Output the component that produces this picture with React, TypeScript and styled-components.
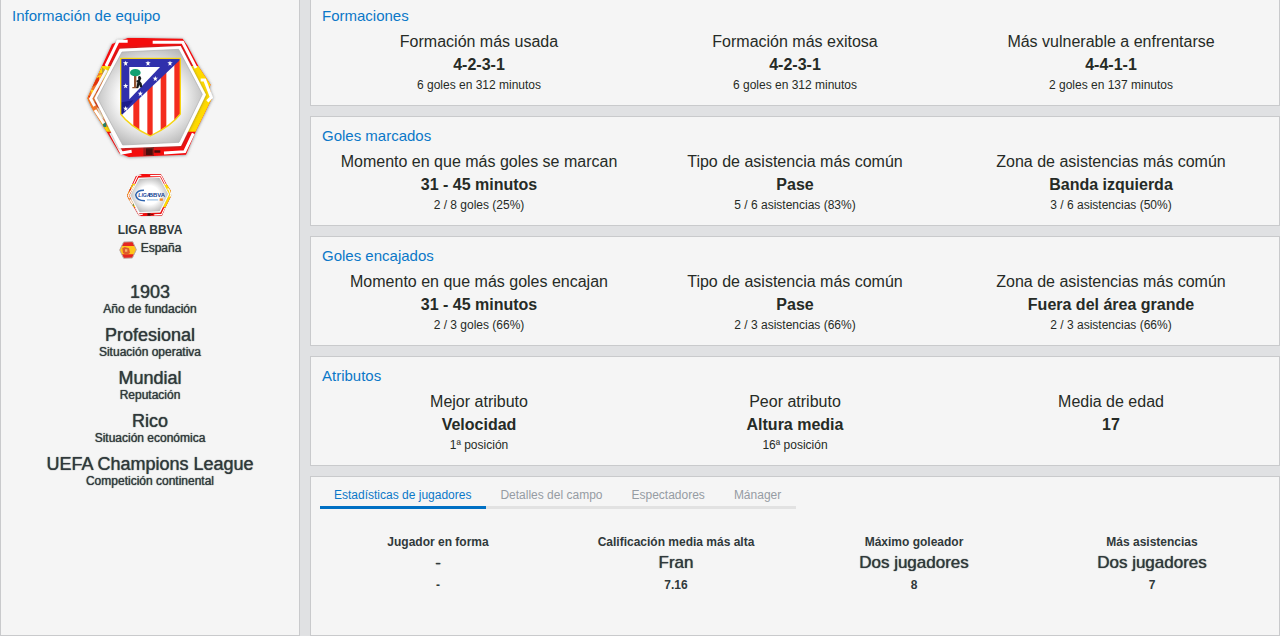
import React, { useState } from "react";
import styled, { createGlobalStyle, css } from "styled-components";

const color = {
  page: "#e0e1e3",
  panel: "#f5f5f5",
  border: "#c9cacc",
  link: "#0b78c8",
  accent: "#0070c4",
  text: "#262b26",
  muted: "#30393b",
  tab: "#969ca3",
};

const GlobalStyle = createGlobalStyle`
  * { box-sizing: border-box; }
  body {
    margin: 0;
    background: ${color.page};
    color: ${color.text};
    font-family: "Liberation Sans", Arial, sans-serif;
  }
`;

/* A medium weight, between the regular and bold faces of the font. */
const medium = css`
  text-shadow: 0 0 1px currentColor;
`;

const Page = styled.main`
  display: grid;
  grid-template-columns: 300px minmax(0, 1fr);
  gap: 10px;
  min-height: 100vh;
`;

const Sidebar = styled.aside`
  display: flex;
  flex-direction: column;
  align-items: center;
  padding: 6px 11px;
  background: ${color.panel};
  border: 1px solid ${color.border};
  border-top: 0;
`;

const Content = styled.div`
  display: flex;
  flex-direction: column;
  gap: 10px;
`;

const Title = styled.h2`
  align-self: stretch;
  margin: 0;
  color: ${color.link};
  font-size: 15px;
  font-weight: 400;
  line-height: 20px;
`;

const Card = styled.section<{ $first?: boolean; $grow?: boolean }>`
  padding: ${(p) => (p.$first ? 6 : 9)}px 10px 11px;
  background: ${color.panel};
  border: 1px solid ${color.border};
  flex-grow: ${(p) => (p.$grow ? 1 : 0)};
  ${(p) => p.$first && "border-top: 0;"}

  ${Title} {
    padding-left: 1px;
  }
`;

const Columns = styled.div`
  display: grid;
  grid-template-columns: repeat(3, minmax(0, 1fr));
  margin-top: 4px;
  text-align: center;
`;

const Label = styled.div`
  font-size: 16px;
  line-height: 24px;
`;

const Value = styled.div`
  font-size: 16px;
  font-weight: 700;
  line-height: 22px;
`;

const Detail = styled.div`
  font-size: 12px;
  line-height: 18px;
`;

const Crest = styled.svg`
  display: block;
  width: 140px;
  height: 135px;
  margin-top: 4px;
`;

const LeagueLogo = styled.svg`
  display: block;
  width: 48px;
  height: 48px;
  margin-top: 6px;
`;

const FlagIcon = styled.svg`
  width: 18px;
  height: 18px;
`;

const LeagueName = styled.div`
  margin-top: 2px;
  color: ${color.muted};
  font-size: 12px;
  font-weight: 700;
  line-height: 18px;
`;

const Country = styled.div`
  display: flex;
  align-items: flex-end;
  gap: 4px;
  height: 20px;
  color: ${color.muted};
  font-size: 12px;
  line-height: 22px;
  ${medium}
`;

const Facts = styled.dl`
  margin: 23px 0 0;
  color: ${color.muted};
  text-align: center;
  ${medium}
`;

const Fact = styled.div`
  display: flex;
  flex-direction: column-reverse;
  padding-bottom: 9px;
`;

const FactName = styled.dt`
  font-size: 12px;
  line-height: 14px;
`;

const FactValue = styled.dd`
  margin: 0;
  font-size: 18px;
  line-height: 20px;
`;

const Tabs = styled.div`
  display: flex;
  width: fit-content;
  margin-left: -1px;
  border-bottom: 3px solid #e2e2e2;
`;

const Tab = styled.button<{ $active: boolean }>`
  margin: 0 0 -3px;
  padding: 0 15px 2px 14px;
  border: 0;
  border-bottom: 3px solid ${(p) => (p.$active ? color.accent : "transparent")};
  background: none;
  color: ${(p) => (p.$active ? color.link : color.tab)};
  font: 12px/18px "Liberation Sans", Arial, sans-serif;
  cursor: pointer;
`;

const Players = styled.div`
  display: grid;
  grid-template-columns: repeat(4, minmax(0, 1fr));
  margin: 23px -2px 0;
  color: ${color.muted};
  text-align: center;
`;

const PlayerLabel = styled.div`
  font-size: 12px;
  font-weight: 700;
  line-height: 20px;
`;

const PlayerValue = styled.div`
  font-size: 17px;
  line-height: 22px;
  ${medium}
`;

const PlayerDetail = styled.div`
  font-size: 12px;
  font-weight: 700;
  line-height: 22px;
`;

function HexFrame({ id }: { id: string }) {
  return (
    <g>
      <defs>
        <clipPath id={id + "-clip"}>
          <path d="M22 205 66 108 96 42 145 23 308 26 322 46 355 108 392 164 388 172 396 205 347 305 318 374 146 381 118 370 80 305 36 235Z" />
        </clipPath>
        <radialGradient id={id + "-shade"} cx="50%" cy="50%" r="55%">
          <stop offset="0.5" stopColor="#fff" />
          <stop offset="1" stopColor="#b9b9b9" />
        </radialGradient>
        <filter id={id + "-shadow"} x="-10%" y="-10%" width="120%" height="120%">
          <feDropShadow dx="0" dy="1" stdDeviation="4" floodColor="#555" floodOpacity="0.7" />
        </filter>
      </defs>
      <g filter={`url(#${id}-shadow)`}>
        <g clipPath={`url(#${id}-clip)`}>
          <path fill="#f40b0e" d="M0 0H420V405H0Z" />
          <path fill="#ffda00" d="M0 108H420V305H0Z" />
          <path fill="#f0762a" d="M15 135 74 128 60 200 84 292 55 270 15 215Z" />
          <path fill="#ffd21a" d="M50 140 66 132 58 150ZM32 178 44 182 36 196ZM60 250 70 258 64 264Z" />
          <path fill="#e2310f" d="M42 150 58 140 56 160 36 172ZM46 182 62 170 56 196ZM24 198 40 196 34 212ZM42 215 55 218 58 240Z" />
          <path fill="#b9a13a" d="M66 112 78 122 66 134ZM44 204 56 206 54 214Z" />
          <path fill="#f4ead2" d="M50 232 58 236 72 268 62 262Z" />
          <path fill="#a01816" d="M190 347H222V378H190Z" />
          <path fill="#4b1010" d="M198 355H218V375H198ZM223 361H241V368H223Z" />
          <path fill="#26836b" d="M68 280 78 277 79 291 70 292Z" />
        </g>
        <g fill="none" stroke="#fff" strokeWidth="9">
          <path d="M143 34H114L78 108" />
          <path d="M80 120 58 160 32 206 44 228" />
          <path d="M45 240 72 280" />
          <path d="M218 37H308L348 114" />
          <path d="M362 150 374 150 394 202 382 214" />
          <path d="M92 308 125 369 155 364" />
          <path d="M252 369 314 365 340 310" />
        </g>
      </g>
      <g filter={`url(#${id}-shadow)`}>
        <path fill="#fff" d="M43 205 119 56 302 48 378 194 303 348 117 355Z" />
      </g>
      <path fill={`url(#${id}-shade)`} stroke="#aaa" strokeWidth="2" d="M52 204 126 66 296 58 367 193 297 337 128 345Z" />
    </g>
  );
}

const STAR = "M0-8 2-3 8-3 3 1 5 7 0 4-5 7-3 1-8-3-2-3Z";
const STARS = [[137, 100], [204, 100], [270, 100], [137, 168], [137, 236], [181, 191], [226, 146]];

function TeamCrest() {
  return (
    <Crest viewBox="0 0 420 405" role="img" aria-label="Escudo del equipo">
      <HexFrame id="team" />
      <defs>
        <clipPath id="shield">
          <path d="M122 85H301V252Q275 287 211 318 148 288 122 252Z" />
        </clipPath>
      </defs>
      <g clipPath="url(#shield)">
        <path fill="#fff" d="M120 80H305V320H120Z" />
        <path fill="#f42c1e" d="M160 80H178V320H160ZM202 80H218V320H202ZM242 80H259V320H242ZM283 80H303V320H283Z" />
        <path fill="#3030ac" d="M118 80H304L300 90 120 260Z" />
        <path fill="#1c1c8c" d="M118 218 160 211 118 262Z" />
        <path fill="#fff" d="M148 111H240L148 208Z" />
      </g>
      <path fill="#915332" d="M162 136H169V171H174V175H157V171H162Z" />
      <ellipse cx="166" cy="128" rx="16" ry="11" fill="#11a071" />
      <path fill="#15181b" d="M174 140 180 137 184 145 180 154 185 160 187 172H180L178 164 175 174H169L172 157 168 153 175 149Z" />
      {STARS.map(([x, y]) => (
        <path key={`${x}-${y}`} d={STAR} fill="#fff" transform={`translate(${x} ${y})`} />
      ))}
      <path fill="none" stroke="#f5d413" strokeWidth="4" d="M122 85H301V252Q275 287 211 318 148 288 122 252Z" />
    </Crest>
  );
}

function LeagueBadge() {
  return (
    <LeagueLogo viewBox="13 -2 406 406" role="img" aria-label="Liga BBVA">
      <HexFrame id="league" />
      <path fill="none" stroke="#2b62ae" strokeWidth="12" d="M165 161Q105 161 95 200 101 249 173 250" />
      <text x="117" y="219" fill="#18479c" fontSize="43" fontWeight="700" fontStyle="italic" fontFamily="Liberation Sans">
        LIGA
      </text>
      <text x="206" y="219" fill="#123f91" fontSize="50" fontWeight="700" fontFamily="Liberation Sans">
        BBVA
      </text>
      <path fill="#8eb9df" d="M190 238H285V247H190Z" />
      <path fill="#f28422" d="M298 230H325V250H298Z" />
    </LeagueLogo>
  );
}

function SpainFlag() {
  return (
    <FlagIcon viewBox="0 0 54 54" aria-hidden="true">
      <defs>
        <clipPath id="spain">
          <path d="M2 27 14 3 41 2 52 26 40 51 14 52Z" />
        </clipPath>
      </defs>
      <g clipPath="url(#spain)">
        <path fill="#e52620" d="M0 0H54V54H0Z" />
        <path fill="#ffc61a" d="M0 15H54V40H0Z" />
        <path fill="#dd5b2b" d="M10 22 17 18 30 22 33 36 22 42 12 36Z" />
        <path fill="#f9b56c" d="M18 25H25V32H18Z" />
      </g>
      <path fill="none" stroke="#bcaaa2" strokeWidth="3" d="M2 27 14 3 41 2 52 26 40 51 14 52Z" />
    </FlagIcon>
  );
}

const facts = [
  ["1903", "Año de fundación"],
  ["Profesional", "Situación operativa"],
  ["Mundial", "Reputación"],
  ["Rico", "Situación económica"],
  ["UEFA Champions League", "Competición continental"],
];

const sections = [
  {
    title: "Formaciones",
    items: [
      ["Formación más usada", "4-2-3-1", "6 goles en 312 minutos"],
      ["Formación más exitosa", "4-2-3-1", "6 goles en 312 minutos"],
      ["Más vulnerable a enfrentarse", "4-4-1-1", "2 goles en 137 minutos"],
    ],
  },
  {
    title: "Goles marcados",
    items: [
      ["Momento en que más goles se marcan", "31 - 45 minutos", "2 / 8 goles (25%)"],
      ["Tipo de asistencia más común", "Pase", "5 / 6 asistencias (83%)"],
      ["Zona de asistencias más común", "Banda izquierda", "3 / 6 asistencias (50%)"],
    ],
  },
  {
    title: "Goles encajados",
    items: [
      ["Momento en que más goles encajan", "31 - 45 minutos", "2 / 3 goles (66%)"],
      ["Tipo de asistencia más común", "Pase", "2 / 3 asistencias (66%)"],
      ["Zona de asistencias más común", "Fuera del área grande", "2 / 3 asistencias (66%)"],
    ],
  },
  {
    title: "Atributos",
    items: [
      ["Mejor atributo", "Velocidad", "1ª posición"],
      ["Peor atributo", "Altura media", "16ª posición"],
      ["Media de edad", "17", ""],
    ],
  },
];

const tabs = ["Estadísticas de jugadores", "Detalles del campo", "Espectadores", "Mánager"];

const players = [
  ["Jugador en forma", "-", "-"],
  ["Calificación media más alta", "Fran", "7.16"],
  ["Máximo goleador", "Dos jugadores", "8"],
  ["Más asistencias", "Dos jugadores", "7"],
];

export default function App() {
  const [active, setActive] = useState(0);

  return (
    <>
      <GlobalStyle />
      <Page>
        <Sidebar>
          <Title>Información de equipo</Title>
          <TeamCrest />
          <LeagueBadge />
          <LeagueName>LIGA BBVA</LeagueName>
          <Country>
            <SpainFlag />
            España
          </Country>
          <Facts>
            {facts.map(([value, name]) => (
              <Fact key={name}>
                <FactName>{name}</FactName>
                <FactValue>{value}</FactValue>
              </Fact>
            ))}
          </Facts>
        </Sidebar>
        <Content>
          {sections.map((section, i) => (
            <Card key={section.title} $first={i === 0}>
              <Title>{section.title}</Title>
              <Columns>
                {section.items.map(([label, value, detail]) => (
                  <div key={label}>
                    <Label>{label}</Label>
                    <Value>{value}</Value>
                    <Detail>{detail}</Detail>
                  </div>
                ))}
              </Columns>
            </Card>
          ))}
          <Card $grow>
            <Tabs role="tablist">
              {tabs.map((tab, i) => (
                <Tab
                  key={tab}
                  type="button"
                  role="tab"
                  aria-selected={i === active}
                  $active={i === active}
                  onClick={() => setActive(i)}
                >
                  {tab}
                </Tab>
              ))}
            </Tabs>
            <Players>
              {players.map(([label, value, detail]) => (
                <div key={label}>
                  <PlayerLabel>{label}</PlayerLabel>
                  <PlayerValue>{value}</PlayerValue>
                  <PlayerDetail>{detail}</PlayerDetail>
                </div>
              ))}
            </Players>
          </Card>
        </Content>
      </Page>
    </>
  );
}
